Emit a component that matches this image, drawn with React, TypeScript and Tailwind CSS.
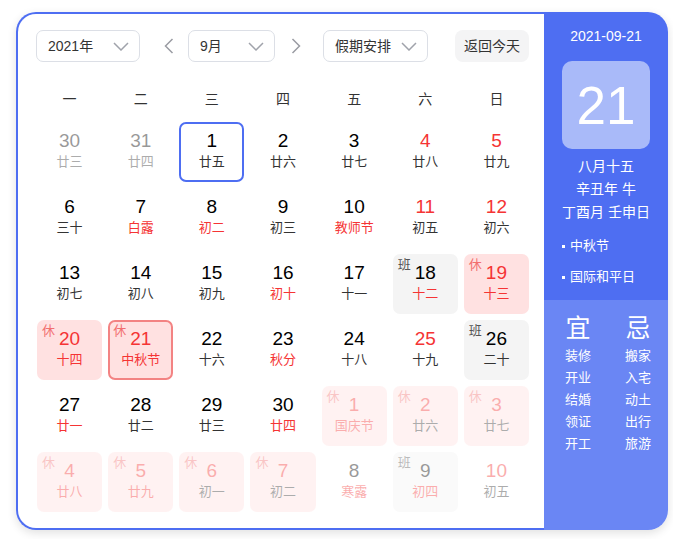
import React from "react";

type Day = {
  n: number;
  lunar: string;
  redNum?: boolean;
  redLunar?: boolean;
  tag?: "休" | "班";
  other?: boolean;
  today?: boolean;
  selected?: boolean;
};

const WEEK = ["一", "二", "三", "四", "五", "六", "日"];

const DAYS: Day[] = [
  { n: 30, lunar: "廿三", other: true },
  { n: 31, lunar: "廿四", other: true },
  { n: 1, lunar: "廿五", today: true },
  { n: 2, lunar: "廿六" },
  { n: 3, lunar: "廿七" },
  { n: 4, lunar: "廿八", redNum: true },
  { n: 5, lunar: "廿九", redNum: true },

  { n: 6, lunar: "三十" },
  { n: 7, lunar: "白露", redLunar: true },
  { n: 8, lunar: "初二", redLunar: true },
  { n: 9, lunar: "初三" },
  { n: 10, lunar: "教师节", redLunar: true },
  { n: 11, lunar: "初五", redNum: true },
  { n: 12, lunar: "初六", redNum: true },

  { n: 13, lunar: "初七" },
  { n: 14, lunar: "初八" },
  { n: 15, lunar: "初九" },
  { n: 16, lunar: "初十", redLunar: true },
  { n: 17, lunar: "十一" },
  { n: 18, lunar: "十二", redLunar: true, tag: "班" },
  { n: 19, lunar: "十三", redNum: true, redLunar: true, tag: "休" },

  { n: 20, lunar: "十四", redNum: true, redLunar: true, tag: "休" },
  { n: 21, lunar: "中秋节", redNum: true, redLunar: true, tag: "休", selected: true },
  { n: 22, lunar: "十六" },
  { n: 23, lunar: "秋分", redLunar: true },
  { n: 24, lunar: "十八" },
  { n: 25, lunar: "十九", redNum: true },
  { n: 26, lunar: "二十", tag: "班" },

  { n: 27, lunar: "廿一", redLunar: true },
  { n: 28, lunar: "廿二" },
  { n: 29, lunar: "廿三" },
  { n: 30, lunar: "廿四", redLunar: true },
  { n: 1, lunar: "国庆节", redNum: true, redLunar: true, tag: "休", other: true },
  { n: 2, lunar: "廿六", redNum: true, tag: "休", other: true },
  { n: 3, lunar: "廿七", redNum: true, tag: "休", other: true },

  { n: 4, lunar: "廿八", redNum: true, redLunar: true, tag: "休", other: true },
  { n: 5, lunar: "廿九", redNum: true, redLunar: true, tag: "休", other: true },
  { n: 6, lunar: "初一", redNum: true, tag: "休", other: true },
  { n: 7, lunar: "初二", redNum: true, tag: "休", other: true },
  { n: 8, lunar: "寒露", redLunar: true, other: true },
  { n: 9, lunar: "初四", redLunar: true, tag: "班", other: true },
  { n: 10, lunar: "初五", redNum: true, other: true },
];

const YI = ["装修", "开业", "结婚", "领证", "开工"];
const JI = ["搬家", "入宅", "动土", "出行", "旅游"];

function Caret() {
  return (
    <svg width="16" height="9" viewBox="0 0 16 9" fill="none">
      <polyline points="1,1 8,8 15,1" stroke="#a0a3ab" strokeWidth="1.5" />
    </svg>
  );
}

function Select({ label, width }: { label: string; width: string }) {
  return (
    <div
      className={`${width} h-[32px] flex items-center justify-between pl-[11px] pr-[10px] border border-[#dcdfe6] rounded-[7px] text-[14px] text-[#333]`}
    >
      <span>{label}</span>
      <Caret />
    </div>
  );
}

function Arrow({ dir }: { dir: "left" | "right" }) {
  return (
    <svg width="10" height="16" viewBox="0 0 10 16" fill="none">
      <polyline
        points={dir === "left" ? "8.5,1 1.5,8 8.5,15" : "1.5,1 8.5,8 1.5,15"}
        stroke="#9a9ca3"
        strokeWidth="1.5"
      />
    </svg>
  );
}

function DayCell({ d }: { d: Day }) {
  let box = "bg-white";
  if (d.tag === "休") box = "bg-[#ffe1e1]";
  if (d.tag === "班") box = "bg-[#f4f4f4]";
  let border = "border-2 border-transparent";
  if (d.today) border = "border-2 border-[#4e6ef2]";
  if (d.selected) border = "border-2 border-[#f38383]";

  return (
    <div
      className={`relative h-[60px] rounded-[7px] flex flex-col items-center pt-[6px] ${box} ${border} ${
        d.other ? "opacity-40" : ""
      }`}
    >
      {d.tag && (
        <span
          className={`absolute left-[3px] top-[1px] text-[13px] leading-[16px] ${
            d.tag === "休" ? "text-[#f26f6f]" : "text-[#555]"
          }`}
        >
          {d.tag}
        </span>
      )}
      <span
        className={`text-[19px] leading-[22px] ${d.redNum ? "text-[#f53434]" : "text-black"}`}
      >
        {d.n}
      </span>
      <span
        className={`text-[13px] leading-[20px] ${d.redLunar ? "text-[#f53434]" : "text-[#333]"}`}
      >
        {d.lunar}
      </span>
    </div>
  );
}

export default function App() {
  return (
    <div
      className="w-[673px] h-[539px] bg-white pl-[16px] pt-[12px]"
      style={{ fontFamily: '"Liberation Sans", "Noto Sans CJK SC", sans-serif' }}
    >
      <div className="flex w-[652px] h-[518px] rounded-[20px] shadow-[0_3px_10px_rgba(0,0,0,0.12)]">
        {/* Calendar */}
        <div className="w-[528px] h-full border-2 border-r-0 border-[#4e6ef2] rounded-l-[20px] pl-[18px] pr-[15px] pt-[16px]">
          <div className="flex items-center">
            <Select label="2021年" width="w-[104px]" />
            <div className="ml-[21px] w-[16px] flex justify-center">
              <Arrow dir="left" />
            </div>
            <div className="ml-[11px]">
              <Select label="9月" width="w-[87px]" />
            </div>
            <div className="ml-[13px] w-[16px] flex justify-center">
              <Arrow dir="right" />
            </div>
            <div className="ml-[19px]">
              <Select label="假期安排" width="w-[105px]" />
            </div>
            <div className="ml-auto w-[74px] h-[32px] rounded-[8px] bg-[#f4f4f5] flex items-center justify-center text-[14px] text-[#333]">
              返回今天
            </div>
          </div>

          <div className="grid grid-cols-7 gap-x-[6px] mt-[26px] ml-[1px]">
            {WEEK.map((w) => (
              <div key={w} className="h-[22px] leading-[22px] text-center text-[14px] text-[#333]">
                {w}
              </div>
            ))}
          </div>

          <div className="grid grid-cols-7 gap-[6px] mt-[12px] ml-[1px]">
            {DAYS.map((d, i) => (
              <DayCell key={i} d={d} />
            ))}
          </div>
        </div>

        {/* Side panel */}
        <div className="w-[124px] h-full rounded-r-[20px] overflow-hidden flex flex-col text-white">
          <div className="h-[288px] bg-[#4e6ef2] flex flex-col items-center pt-[14px]">
            <div className="text-[14px] leading-[20px]">2021-09-21</div>
            <div className="mt-[15px] w-[88px] h-[88px] rounded-[10px] bg-[#a9baf9] flex items-center justify-center text-[53px] leading-none">
              21
            </div>
            <div className="mt-[6px] text-[14px] leading-[23px] text-center">
              <div>八月十五</div>
              <div>辛丑年 牛</div>
              <div>丁酉月 壬申日</div>
            </div>
            <div className="self-start pl-[18px] mt-[12px] text-[13px] leading-[20px] flex flex-col gap-[11px]">
              <div className="flex items-center">
                <span className="w-[3px] h-[3px] bg-white mr-[5px]" />
                中秋节
              </div>
              <div className="flex items-center">
                <span className="w-[3px] h-[3px] bg-white mr-[5px]" />
                国际和平日
              </div>
            </div>
          </div>
          <div className="flex-1 bg-[#6a86f4] pt-[12px] pl-[14px]">
            <div className="grid grid-cols-[40px_40px] gap-x-[20px]">
              <div className="flex flex-col items-center">
                <div className="text-[25px] leading-[32px]">宜</div>
                <div className="mt-[1px] text-[13px] leading-[22px] flex flex-col items-center">
                  {YI.map((t) => (
                    <div key={t}>{t}</div>
                  ))}
                </div>
              </div>
              <div className="flex flex-col items-center">
                <div className="text-[25px] leading-[32px]">忌</div>
                <div className="mt-[1px] text-[13px] leading-[22px] flex flex-col items-center">
                  {JI.map((t) => (
                    <div key={t}>{t}</div>
                  ))}
                </div>
              </div>
            </div>
          </div>
        </div>
      </div>
    </div>
  );
}
